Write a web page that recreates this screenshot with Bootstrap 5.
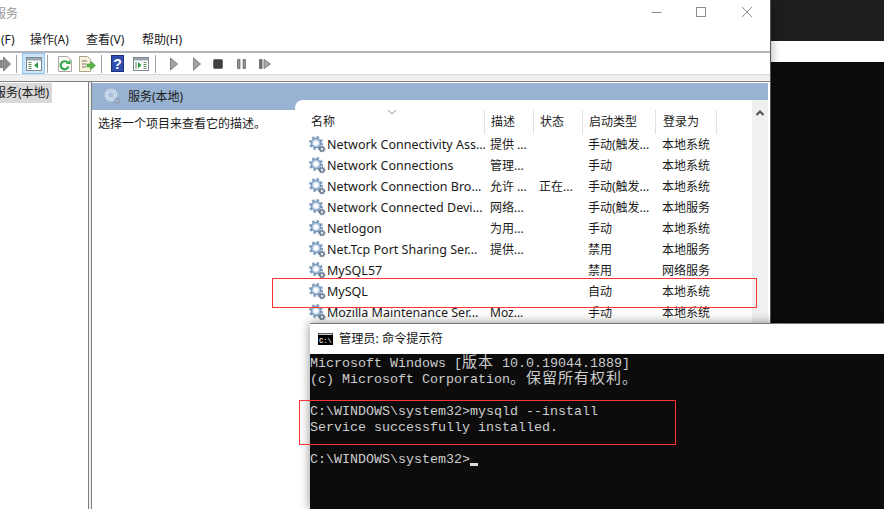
<!DOCTYPE html>
<html lang="zh"><head><meta charset="utf-8">
<link rel="stylesheet" href="https://cdn.jsdelivr.net/npm/bootstrap@5.3.0/dist/css/bootstrap.min.css">
<style>
html,body{margin:0;height:100%;overflow:hidden;background:#0c0c0c}
body{font:12px/16px "Noto Sans","Noto Sans CJK SC",sans-serif;color:#1a1a1a}
.desk{position:relative;width:884px;height:509px;overflow:hidden;background:#0c0c0c}
.bg-top{height:41px;background:#1e1e1e}
.bg-band{height:21px;background:#fff}
.svc-win{position:absolute;left:0;top:0;width:771px;height:509px;background:#fff;border-right:1px solid #555;box-shadow:2px 0 8px rgba(0,0,0,.25)}
.svc-title{height:33px;color:#999;padding-top:6px;flex:none}
.svc-title span{margin-left:-6px}
.win-ctl{position:absolute;right:0;top:0}
.menu-row{height:20px;line-height:14px;border-bottom:2px solid #b4b4bc;flex:none}
.mi{width:56px;flex:none}
.mi0{width:30px;flex:none;padding-left:1px}
.tool-row{height:22px;background:#fff;border-bottom:1px solid #d9d9d9;flex:none}
.tool-row svg{flex:none}
.tb-sep{width:1px;height:18px;background:#a0a0a0;flex:none}
.tb-on{width:23px;height:21px;background:#cce4f7;border:1px solid #90c8f6;flex:none}
.s2{margin-left:2px}.s5{margin-left:5px}.s6{margin-left:6px}.s7{margin-left:7px}.s9{margin-left:9px}.s10{margin-left:10px}.s12{margin-left:12px}.s13{margin-left:13px}.s14{margin-left:14px}.s15{margin-left:15px}
.tb-band{height:6px;background:#f0f0f0;flex:none}
.svc-body{height:428px;border-top:1px solid #808080;flex:none}
.tree{width:89px;flex:none;background:#fff;border-right:1px solid #808080}
.tree-sel{width:52px;height:20px;background:#d9d9d9;line-height:20px;white-space:nowrap;overflow:hidden;margin-top:1px}
.tree-sel span{margin-left:-6px;display:block}
.split{width:2px;background:#f0f0f0;flex:none}
.detail{width:679px;flex:none;border-left:1px solid #808080}
.det-head{height:27px;background:#98b3d1;margin:1px 2px -10px 0;padding-left:12px;line-height:26px}
.det-head svg{margin-right:7px;flex:none}
.det-desc{width:203px;flex:none;padding:10px 0 0 6px;line-height:27px;white-space:nowrap}
.det-list{width:473px;flex:none;background:#fff;border-top-left-radius:8px;position:relative}
.list-wrap{flex:1;min-width:0;padding-left:10px;padding-top:10px}
.hd-row{height:24px;line-height:23px;position:relative;white-space:nowrap}
.hd-row>div,.svc-row>div{flex:none;padding-left:5px;overflow:hidden;white-space:nowrap}
.hd-row>div{height:24px;border-right:1px solid #e2e2e2;padding-left:6px}
.c1{width:180px}.c2{width:49px}.c3{width:49px}.c4{width:73px}.c5{width:61px}
.hd-row>.c5{padding-left:7px}
.svc-row>.c5{padding-left:6px}
.sort-mark{position:absolute;left:82px;top:-1px}
.svc-row{height:21px;line-height:21px}
.svc-row>.c1{padding-left:4px;display:flex;align-items:center;gap:1px;font-size:12.5px}
.svc-row .c1 svg{flex:none}
.sb{width:16px;flex:none;background:#f0f0f0;text-align:center;padding-top:4px}
.cmd-win{position:absolute;left:310px;top:323px;width:574px;height:186px;background:#0c0c0c;border-top:1px solid #777;box-shadow:0 0 10px rgba(0,0,0,.45)}
.cmd-title{height:30px;background:#fff;padding-left:8px;gap:6px;color:#111;font-size:12.2px;flex:none}
.cmd-text{font:13.33px/16px "Liberation Mono","Noto Sans CJK SC",monospace;color:#ccc;white-space:pre;padding-top:2px}
.cmd-text i{font:15px/0 "Noto Sans CJK SC",sans-serif;letter-spacing:1px}
.caret-box{display:inline-block;width:8px;height:3px;background:#ddd;vertical-align:-3px}
.red-box{position:absolute;border:1px solid #f33;pointer-events:none}
.rb1{left:272px;top:278px;width:485px;height:30px}
.rb2{left:299px;top:400px;width:377px;height:45px}
</style></head><body>
<svg width="0" height="0" class="position-absolute">
<defs>
<symbol id="gear" viewBox="0 0 17 17">
<circle cx="7" cy="7" r="5.500" fill="none" stroke="#7f9dbf" stroke-width="3" stroke-dasharray="2.300 2"/>
<circle cx="7" cy="7" r="4.800" fill="#a9c3de" stroke="#6f8fb3" stroke-width="1"/>
<circle cx="7" cy="7" r="2.600" fill="#fff" stroke="#dfe9f3" stroke-width=".6"/>
<circle cx="13" cy="13" r="2.600" fill="#8595a8" stroke="#5f7086" stroke-width="1.500" stroke-dasharray="1 .7"/>
<circle cx="13" cy="13" r="1" fill="#fff"/>
</symbol>
<symbol id="gear-lt" viewBox="0 0 17 17">
<circle cx="7" cy="7" r="5.500" fill="none" stroke="#d5e2f0" stroke-width="1.500"/>
<circle cx="7" cy="7" r="3.500" fill="#a8c0da" stroke="#eef4fa" stroke-width="1"/>
<circle cx="13" cy="13" r="2.400" fill="#a8b6c8" stroke="#7d8ea5" stroke-width="1.200" stroke-dasharray="1 .7"/>
</symbol>
<symbol id="play" viewBox="0 0 8 14">
<path d="M.5 1v12l7-6z" fill="#a4a4a4" stroke="#808080"/>
</symbol>
</defs></svg>
<div class="desk">
<div class="bg-top"></div><div class="bg-band"></div>

<div class="svc-win d-flex flex-column">
 <div class="svc-title"><span>服务</span></div>
 <svg class="win-ctl" width="122" height="26" viewBox="0 0 122 26"><path d="M3.500 12.500h10" stroke="#8c8c8c" fill="none"/><rect x="48.500" y="7.500" width="9" height="9" fill="none" stroke="#8c8c8c"/><path d="M94 7l10 10M104 7l-10 10" stroke="#8c8c8c" fill="none"/></svg>
 <div class="menu-row d-flex"><span class="mi0">(F)</span><span class="mi">操作(A)</span><span class="mi">查看(V)</span><span class="mi">帮助(H)</span></div>
 <div class="tool-row d-flex align-items-center">
  <svg width="11" height="16" viewBox="0 0 11 16"><path d="M0 4.500h3.500V1L10.500 8l-7 7v-3.500H0z" fill="#8f8f8f" stroke="#707070" stroke-width=".8"/></svg>
  <div class="tb-sep s5"></div>
  <div class="tb-on s5 d-flex align-items-center justify-content-center"><svg width="16" height="14" viewBox="0 0 16 14"><rect x=".5" y=".5" width="15" height="13" fill="#fff" stroke="#808890"/><rect x="1" y="1" width="14" height="2.500" fill="#9aa4b0"/><path d="M2.500 5.500h3M2.500 7.500h3M2.500 9.500h3M2.500 11.500h3" stroke="#5a8a5a"/><path d="M12 5v6.500L8 8.250z" fill="#2e9a3e"/></svg></div>
  <div class="tb-sep s2"></div>
  <svg class="s10" width="14" height="16" viewBox="0 0 14 16"><path d="M.5.500h9l4 4v11H.5z" fill="#fbfbf8" stroke="#a8a8a8"/><path d="M10 7a4 4 0 1 0 .5 3.500" fill="none" stroke="#2ea84a" stroke-width="2.200"/><path d="M8 8h4.500V3.500z" fill="#2ea84a"/></svg>
  <svg class="s7" width="17" height="16" viewBox="0 0 17 16"><path d="M.5.500h8l3 3v12H.5z" fill="#f8f3d8" stroke="#a8a890"/><path d="M3 5h5M3 8h4M3 11h4" stroke="#777"/><path d="M8 8h4V5.500l4.500 4-4.500 4V11H8z" fill="#58b848" stroke="#3a9a34" stroke-width=".6"/></svg>
  <div class="tb-sep s5"></div>
  <svg class="s9" width="13" height="17" viewBox="0 0 13 17"><rect x=".5" y=".5" width="12" height="16" fill="#2f4fb0" stroke="#1c2f80"/><text x="6.500" y="13.500" text-anchor="middle" font-size="14" font-weight="700" fill="#fff" font-family="Liberation Sans">?</text></svg>
  <svg class="s9" width="16" height="14" viewBox="0 0 16 14"><rect x=".5" y=".5" width="15" height="13" fill="#fff" stroke="#808890"/><rect x="1" y="1" width="14" height="2.500" fill="#9aa4b0"/><path d="M10.500 5.500h3M10.500 7.500h3M10.500 9.500h3M10.500 11.500h3" stroke="#5a8a5a"/><path d="M5 5v6.500l3.500-3.250z" fill="#2e9a3e"/><path d="M3 5v7" stroke="#5a8a5a"/></svg>
  <div class="tb-sep s6"></div>
  <svg class="s14" width="8" height="14"><use href="#play"/></svg>
  <svg class="s15" width="8" height="14"><use href="#play"/></svg>
  <svg class="s12" width="10" height="10" viewBox="0 0 10 10"><rect x=".5" y=".5" width="9" height="9" rx="1" fill="#404040" stroke="#6a6a6a"/></svg>
  <svg class="s14" width="9" height="10" viewBox="0 0 9 10"><path d="M.5.500h2.500v9H.500zM6 .5h2.500v9H6z" fill="#8e8e8e" stroke="#6f6f6f" stroke-width=".8"/></svg>
  <svg class="s13" width="12" height="10" viewBox="0 0 12 10"><path d="M.5.500h2.500v9H.500z" fill="#707070" stroke="#606060" stroke-width=".8"/><path d="M5 .5v9L11.500 5z" fill="#a8a8a8" stroke="#808080"/></svg>
 </div>
 <div class="tb-band"></div>
 <div class="svc-body d-flex">
  <div class="tree"><div class="tree-sel"><span>服务(本地)</span></div></div>
  <div class="split"></div>
  <div class="detail">
   <div class="det-head d-flex align-items-center"><svg width="17" height="17"><use href="#gear-lt"/></svg><span>服务(本地)</span></div>
   <div class="d-flex">
    <div class="det-desc">选择一个项目来查看它的描述。</div>
    <div class="det-list d-flex">
     <div class="list-wrap">
      <div class="hd-row d-flex"><div class="c1">名称</div><div class="c2">描述</div><div class="c3">状态</div><div class="c4">启动类型</div><div class="c5">登录为</div>
       <svg class="sort-mark" width="10" height="6" viewBox="0 0 10 6"><path d="M1 1l4 4 4-4" fill="none" stroke="#999"/></svg></div>
      <div class="svc-row d-flex"><div class="c1"><svg width="17" height="17"><use href="#gear"/></svg>Network Connectivity Ass...</div><div class="c2">提供 ...</div><div class="c3"></div><div class="c4">手动(触发...</div><div class="c5">本地系统</div></div>
      <div class="svc-row d-flex"><div class="c1"><svg width="17" height="17"><use href="#gear"/></svg>Network Connections</div><div class="c2">管理...</div><div class="c3"></div><div class="c4">手动</div><div class="c5">本地系统</div></div>
      <div class="svc-row d-flex"><div class="c1"><svg width="17" height="17"><use href="#gear"/></svg>Network Connection Bro...</div><div class="c2">允许 ...</div><div class="c3">正在...</div><div class="c4">手动(触发...</div><div class="c5">本地系统</div></div>
      <div class="svc-row d-flex"><div class="c1"><svg width="17" height="17"><use href="#gear"/></svg>Network Connected Devi...</div><div class="c2">网络...</div><div class="c3"></div><div class="c4">手动(触发...</div><div class="c5">本地服务</div></div>
      <div class="svc-row d-flex"><div class="c1"><svg width="17" height="17"><use href="#gear"/></svg>Netlogon</div><div class="c2">为用...</div><div class="c3"></div><div class="c4">手动</div><div class="c5">本地系统</div></div>
      <div class="svc-row d-flex"><div class="c1"><svg width="17" height="17"><use href="#gear"/></svg>Net.Tcp Port Sharing Ser...</div><div class="c2">提供...</div><div class="c3"></div><div class="c4">禁用</div><div class="c5">本地服务</div></div>
      <div class="svc-row d-flex"><div class="c1"><svg width="17" height="17"><use href="#gear"/></svg>MySQL57</div><div class="c2"></div><div class="c3"></div><div class="c4">禁用</div><div class="c5">网络服务</div></div>
      <div class="svc-row d-flex"><div class="c1"><svg width="17" height="17"><use href="#gear"/></svg>MySQL</div><div class="c2"></div><div class="c3"></div><div class="c4">自动</div><div class="c5">本地系统</div></div>
      <div class="svc-row d-flex"><div class="c1"><svg width="17" height="17"><use href="#gear"/></svg>Mozilla Maintenance Ser...</div><div class="c2">Moz...</div><div class="c3"></div><div class="c4">手动</div><div class="c5">本地系统</div></div>
     </div>
     <div class="sb"><svg width="10" height="8" viewBox="0 0 10 8"><path d="M1.500 6L5 2.500 8.500 6" fill="none" stroke="#505050" stroke-width="2"/></svg></div>
    </div>
   </div>
  </div>
 </div>
</div>

<div class="cmd-win d-flex flex-column">
 <div class="cmd-title d-flex align-items-center"><svg width="15" height="12" viewBox="0 0 15 12"><rect width="15" height="12" fill="#000"/><rect x=".5" y=".5" width="14" height="1.500" fill="#c8c8c8"/><text x="1" y="9.500" font-size="7" font-weight="700" fill="#ddd" font-family="Liberation Mono">C:\</text></svg><span>管理员: 命令提示符</span></div>
 <div class="cmd-text">Microsoft Windows [<i>版本</i> 10.0.19044.1889]
(c) Microsoft Corporation<i>。保留所有权利。</i>

C:\WINDOWS\system32&gt;mysqld --install
Service successfully installed.

C:\WINDOWS\system32&gt;<span class="caret-box"></span></div>
</div>

<div class="red-box rb1"></div>
<div class="red-box rb2"></div>
</div>
</body></html>
